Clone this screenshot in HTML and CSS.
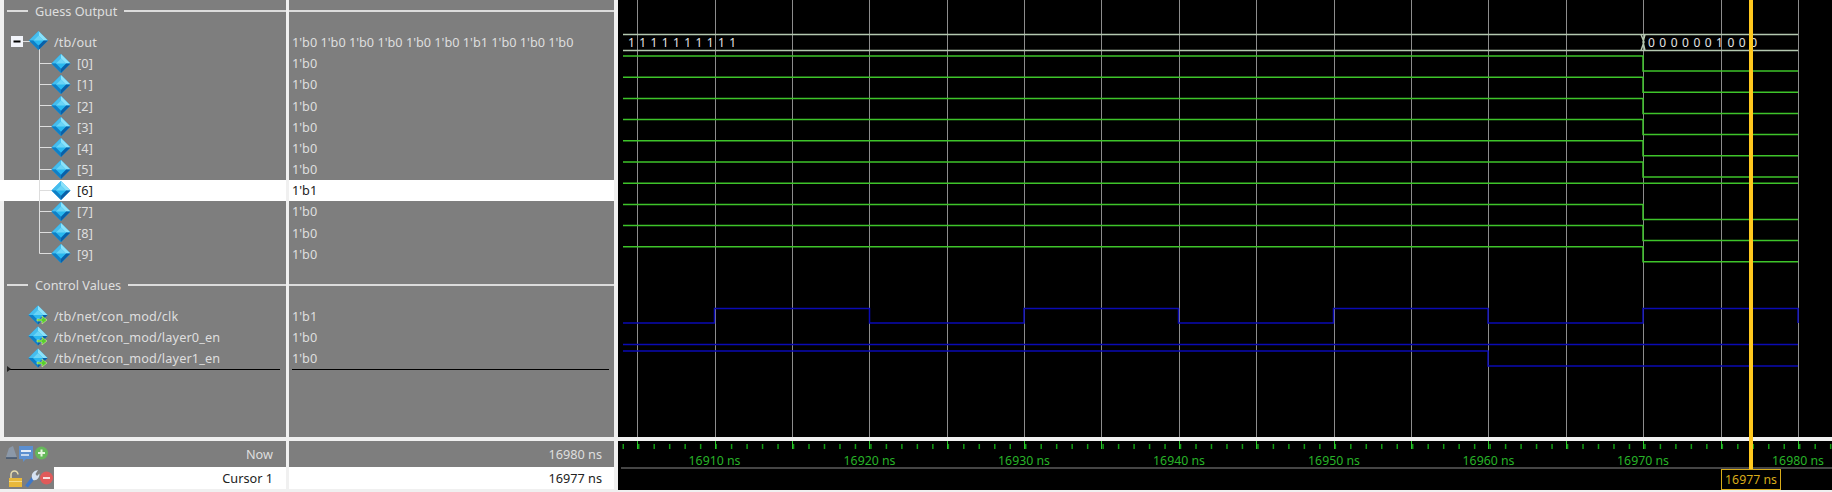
FILE: index.html
```html
<!DOCTYPE html>
<html lang="en">
<head>
<meta charset="utf-8">
<title>Wave</title>
<link rel="stylesheet" href="styles.css">
</head>
<body>
<svg class="defs" width="0" height="0" aria-hidden="true">
  <defs>
    <g id="dia">
      <path d="M0-9.500 9.500 0 0 9.500-9.500 0Z" fill="#19a3e6"/>
      <path d="M0-9.500 9.500 0H0Z" fill="#8be2fa"/>
      <path d="M0-9.500-9.500 0H0Z" fill="#45bdee"/>
      <path d="M9.500 0 0 9.500V5L5 0Z" fill="#0a60a8"/>
      <path d="M-9.500 0 0 9.500V5L-5 0Z" fill="#0f7fc6"/>
      <path d="M0-5 5 0 0 5-5 0Z" fill="#2ab8ef"/>
      <path d="M0-5 5 0H-5Z" fill="#6ad4f6"/>
    </g>
    <g id="dia-in">
      <use href="#dia"/>
      <path d="M-1 4H4V1L9 5 4 9V6H-1Z" fill="#56d02c" stroke="#e8f5b0" stroke-width=".5"/>
    </g>
  </defs>
</svg>
<div class="app">
  <section class="pane names">
    <div class="divider"><span>Guess Output</span></div>
    <div class="row top"><svg class="ico wide" viewBox="0 0 50 21"><rect x="7" y="5" width="12" height="11" fill="#f2f4fa"/><path d="M9.500 10.500h7" stroke="#000" stroke-width="2"/><path d="M19 10.500h8M35.500 10V23" stroke="#ddd"/><use href="#dia" x="34.500" y="9.500"/></svg><span>/tb/out</span></div>
    <div class="row child"><svg class="ico tree" viewBox="0 0 73 21"><path d="M35.500 -1V22M35.500 10.500H48" stroke="#ddd"/><use href="#dia" x="57" y="10.500"/></svg><span>[0]</span></div>
    <div class="row child"><svg class="ico tree" viewBox="0 0 73 21"><path d="M35.500 -1V22M35.500 10.500H48" stroke="#ddd"/><use href="#dia" x="57" y="10.500"/></svg><span>[1]</span></div>
    <div class="row child"><svg class="ico tree" viewBox="0 0 73 21"><path d="M35.500 -1V22M35.500 10.500H48" stroke="#ddd"/><use href="#dia" x="57" y="10.500"/></svg><span>[2]</span></div>
    <div class="row child"><svg class="ico tree" viewBox="0 0 73 21"><path d="M35.500 -1V22M35.500 10.500H48" stroke="#ddd"/><use href="#dia" x="57" y="10.500"/></svg><span>[3]</span></div>
    <div class="row child"><svg class="ico tree" viewBox="0 0 73 21"><path d="M35.500 -1V22M35.500 10.500H48" stroke="#ddd"/><use href="#dia" x="57" y="10.500"/></svg><span>[4]</span></div>
    <div class="row child"><svg class="ico tree" viewBox="0 0 73 21"><path d="M35.500 -1V22M35.500 10.500H48" stroke="#ddd"/><use href="#dia" x="57" y="10.500"/></svg><span>[5]</span></div>
    <div class="row child sel"><svg class="ico tree" viewBox="0 0 73 21"><path d="M35.500 0V21M35.500 10.500H48" stroke="#ddd"/><use href="#dia" x="57" y="10.500"/></svg><span>[6]</span></div>
    <div class="row child"><svg class="ico tree" viewBox="0 0 73 21"><path d="M35.500 -1V22M35.500 10.500H48" stroke="#ddd"/><use href="#dia" x="57" y="10.500"/></svg><span>[7]</span></div>
    <div class="row child"><svg class="ico tree" viewBox="0 0 73 21"><path d="M35.500 -1V22M35.500 10.500H48" stroke="#ddd"/><use href="#dia" x="57" y="10.500"/></svg><span>[8]</span></div>
    <div class="row child"><svg class="ico tree" viewBox="0 0 73 21"><path d="M35.500 -1V10.500H48" fill="none" stroke="#ddd"/><use href="#dia" x="57" y="10.500"/></svg><span>[9]</span></div>
    <div class="divider lower"><span>Control Values</span></div>
    <div class="row top"><svg class="ico wide" viewBox="0 0 50 21"><use href="#dia-in" x="34" y="10"/></svg><span>/tb/net/con_mod/clk</span></div>
    <div class="row top"><svg class="ico wide" viewBox="0 0 50 21"><use href="#dia-in" x="34" y="10"/></svg><span>/tb/net/con_mod/layer0_en</span></div>
    <div class="row top"><svg class="ico wide" viewBox="0 0 50 21"><use href="#dia-in" x="34" y="10"/></svg><span>/tb/net/con_mod/layer1_en</span></div>
    <div class="endline names-end"></div>
  </section>

  <section class="pane values">
    <div class="divider plain"></div>
    <div class="row val">1'b0 1'b0 1'b0 1'b0 1'b0 1'b0 1'b1 1'b0 1'b0 1'b0</div>
    <div class="row val">1'b0</div>
    <div class="row val">1'b0</div>
    <div class="row val">1'b0</div>
    <div class="row val">1'b0</div>
    <div class="row val">1'b0</div>
    <div class="row val">1'b0</div>
    <div class="row val sel">1'b1</div>
    <div class="row val">1'b0</div>
    <div class="row val">1'b0</div>
    <div class="row val">1'b0</div>
    <div class="divider plain lower"></div>
    <div class="row val">1'b1</div>
    <div class="row val">1'b0</div>
    <div class="row val">1'b0</div>
    <div class="endline values-end"></div>
  </section>

  <svg class="wave" viewBox="618 0 1214 492" aria-label="Waveforms">
    <rect x="618" y="0" width="1214" height="492" fill="#000"/>
    <path class="grid" d="M637.500 0V437M715.500 0V437M792.500 0V437M869.500 0V437M947.500 0V437M1024.500 0V437M1101.500 0V437M1179.500 0V437M1256.500 0V437M1334.500 0V437M1411.500 0V437M1488.500 0V437M1566.500 0V437M1643.500 0V437M1721.500 0V437M1798.500 0V437"/>

    <path class="bus" d="M623 34.500H1641L1645 34.500H1798M623 50.500H1641L1645 50.500H1798M1641 34.500 1644 42 1641 50.500M1645 34.500 1643 42 1645 50.500"/>
    <text class="busval" x="628" y="47" textLength="108" lengthAdjust="spacing">1 1 1 1 1 1 1 1 1 1</text>
    <text class="busval" x="1648" y="47" textLength="109" lengthAdjust="spacing">0 0 0 0 0 0 1 0 0 0</text>

    <path class="sig" d="M623 56H1643V71H1798"/>
    <path class="sig" d="M623 77.200H1643V92.200H1798"/>
    <path class="sig" d="M623 98.400H1643V113.400H1798"/>
    <path class="sig" d="M623 119.600H1643V134.600H1798"/>
    <path class="sig" d="M623 140.800H1643V155.800H1798"/>
    <path class="sig" d="M623 162H1643V177H1798"/>
    <path class="sig" d="M623 183.200H1798"/>
    <path class="sig" d="M623 204.400H1643V219.400H1798"/>
    <path class="sig" d="M623 225.600H1643V240.600H1798"/>
    <path class="sig" d="M623 246.800H1643V261.800H1798"/>

    <path class="ctl" d="M623 323H714.500V308.500H869.500V323H1024V308.500H1178.500V323H1333.500V308.500H1488V323H1643V308.500H1798V323"/>
    <path class="ctl" d="M623 344.500H1798"/>
    <path class="ctl" d="M623 351H1488V366H1798"/>

    <rect class="strip" x="618" y="437" width="1214" height="4"/>
    <path class="tick" d="M622.500 446.500H1832"/>
    <path class="tick-major" d="M637.500 441V449M715.500 441V449M792.500 441V449M869.500 441V449M947.500 441V449M1024.500 441V449M1101.500 441V449M1179.500 441V449M1256.500 441V449M1334.500 441V449M1411.500 441V449M1488.500 441V449M1566.500 441V449M1643.500 441V449M1721.500 441V449M1798.500 441V449"/>
    <path class="rule" d="M621 468H1832"/>
    <rect class="strip" x="618" y="490" width="1214" height="2"/>

    <text class="label" x="714.500" y="465">16910 ns</text>
    <text class="label" x="869.500" y="465">16920 ns</text>
    <text class="label" x="1024" y="465">16930 ns</text>
    <text class="label" x="1179" y="465">16940 ns</text>
    <text class="label" x="1334" y="465">16950 ns</text>
    <text class="label" x="1488.500" y="465">16960 ns</text>
    <text class="label" x="1643" y="465">16970 ns</text>
    <text class="label" x="1798" y="465">16980 ns</text>

    <rect class="cursor" x="1749" y="0" width="4" height="469"/>
    <rect class="cursor-box" x="1721.500" y="469.500" width="59" height="20"/>
    <text class="cursor-label" x="1751" y="484">16977 ns</text>
  </svg>

  <div class="foot-name now">
    <svg class="ico tools" viewBox="0 0 54 26">
      <path d="M6 16 9 7 13 5 16 14 17 17H6Z" fill="#8b98a8"/><path d="M6 17H17" stroke="#41556e" stroke-width="1.500"/>
      <rect x="19" y="5" width="14" height="13" fill="#5b8fd0"/><rect x="21" y="9" width="10" height="2" fill="#e3ecf7"/><rect x="21" y="13" width="8" height="2" fill="#c4d6ec"/><path d="M23 18v3l3-3Z" fill="#5b8fd0"/>
      <circle cx="41.500" cy="12" r="6.500" fill="#66b85a"/><path d="M38 12h7M41.500 8.500v7" stroke="#e6f5df" stroke-width="2"/>
    </svg>
    <span>Now</span>
  </div>
  <div class="foot-val now">16980 ns</div>

  <div class="foot-name cur">
    <svg class="ico tools-b" viewBox="0 0 54 22">
      <path d="M11 11V7.500a3.500 3.500 0 0 1 7 0" fill="none" stroke="#e8dcae" stroke-width="1.500"/>
      <rect x="9" y="11" width="13" height="9" fill="#e8b83a"/><rect x="9" y="14" width="13" height="1" fill="#f6dc8a"/>
      <path d="M26.500 19.500 34 10" fill="none" stroke="#3f78c8" stroke-width="3.500"/>
      <path d="M32 11C31 7 33 4 38 3L35.500 7 37 9 39.500 6.500C39.500 11 37 14 33 13Z" fill="#d6e2f2"/>
      <circle cx="46.500" cy="11" r="6.500" fill="#e05a5a"/><path d="M43 11h7" stroke="#f8dede" stroke-width="2"/>
    </svg>
    <div class="cur-label">Cursor 1</div>
  </div>
  <div class="foot-val cur">16977 ns</div>
</div>
</body>
</html>
```

FILE: styles.css
```css
* { box-sizing: border-box; }
html, body { margin: 0; height: 100%; overflow: hidden; }
body { background: #f0f0f0; font-family: "Noto Sans", "Liberation Sans", sans-serif; font-size: 12.700px; }
.defs { position: absolute; }

.app {
  display: grid;
  grid-template-columns: 286px 325px 1fr;
  grid-template-rows: 437px 30px 22px;
  column-gap: 3px;
  width: 1832px;
  height: 492px;
  background: #f0f0f0;
}

.pane { position: relative; background: #7e7e7e; color: #dedede; }
.names { margin-left: 4px; }

.wave { grid-column: 3; grid-row: 1 / 4; height: 492px; width: 1214px; margin-left: 1px; display: block; }

.divider { display: flex; align-items: center; height: 22px; margin-bottom: 9.400px; padding-left: 3px; gap: 7px; }
.divider::before { content: ""; width: 21px; height: 2px; background: #dcdcdc; }
.divider::after { content: ""; flex: 1; height: 2px; background: #dcdcdc; }
.divider.plain { padding-left: 0; gap: 0; }
.divider.plain::before { display: none; }
.divider.lower { margin-top: 9.600px; margin-bottom: 9px; }

.row { display: flex; align-items: center; height: 21.200px; white-space: nowrap; }
.row .ico { flex: none; height: 21px; overflow: visible; }
.names .row span { letter-spacing: .15px; }
.wide { width: 50px; }
.tree { width: 73px; }
.val { padding-left: 3px; }
.sel { background: #fff; color: #222; }
.names .sel { margin-left: -4px; padding-left: 4px; }

.endline { position: absolute; top: 369px; height: 1px; background: #000; }
.names-end { left: 3px; right: 6px; }
.names-end::before {
  content: ""; position: absolute; left: 0; top: -3px;
  border-left: 4px solid #222; border-top: 3px solid transparent; border-bottom: 3px solid transparent;
}
.values-end { left: 3px; right: 5px; }

.foot-name, .foot-val { display: flex; align-items: center; justify-content: flex-end; background: #7e7e7e; color: #dedede; }
.foot-name.now, .foot-val.now { grid-row: 2; height: 26px; margin-top: 4px; align-self: start; }
.foot-name.cur, .foot-val.cur { grid-row: 3; height: 22px; }
.foot-name { grid-column: 1; padding-right: 13px; }
.foot-val { grid-column: 2; padding-right: 12px; }
.foot-val.cur { background: #fff; color: #222; }
.foot-name.cur { padding-right: 0; }
.foot-name .ico { flex: none; }
.tools { width: 54px; height: 26px; margin-right: auto; }
.tools-b { width: 54px; height: 22px; }
.cur-label { flex: 1; height: 22px; line-height: 22px; background: #fff; color: #222; text-align: right; padding-right: 13px; }

.grid { stroke: #8c8c8c; stroke-width: 1; fill: none; }
.bus { stroke: #b4c8b0; stroke-width: 1.500; fill: none; }
.busval { fill: #e4e4e4; font-size: 12px; font-family: "Noto Sans", sans-serif; }
.sig { stroke: #3ec42a; stroke-width: 1.500; fill: none; }
.ctl { stroke: #0a0ab4; stroke-width: 1.500; fill: none; }
.strip { fill: #f0f0f0; }
.tick { stroke: #129a12; stroke-width: 5; stroke-dasharray: 1.500 13.980; fill: none; }
.tick-major { stroke: #2ec82e; stroke-width: 1; fill: none; }
.rule { stroke: #8a8a8a; stroke-width: 1; }
.label { fill: #28b428; font-size: 12.300px; text-anchor: middle; font-family: "Noto Sans", sans-serif; }
.cursor { fill: #ffc81e; }
.cursor-box { fill: #000; stroke: #d8ac1a; stroke-width: 1; }
.cursor-label { fill: #d8ac1a; font-size: 12.300px; text-anchor: middle; font-family: "Noto Sans", sans-serif; }
```
